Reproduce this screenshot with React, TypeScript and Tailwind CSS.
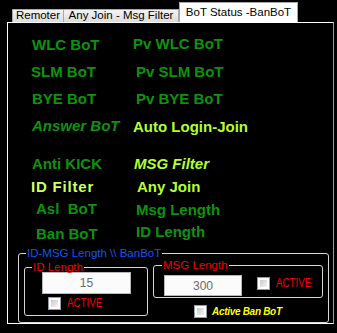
import React from "react";

const green = "text-[#0b940b]";
const lime = "text-[#b4ff2c]";

function Label({ children, cls = "" }: { children: React.ReactNode; cls?: string }) {
  return <span className={`font-bold text-[15px] leading-[17px] whitespace-pre ${cls}`}>{children}</span>;
}

function Check() {
  return (
    <div className="w-[13px] h-[13px] border border-[#8f9db0] bg-white p-[2px] shrink-0">
      <div className="w-full h-full bg-linear-to-br from-[#c9c9c9] to-[#f6f6f6]" />
    </div>
  );
}

function Active() {
  return (
    <span className="ml-[6px] inline-block origin-left scale-x-[0.78] text-[12.5px] leading-none text-[#f00000]">
      ACTIVE
    </span>
  );
}

export default function App() {
  return (
    <div className="w-[337px] h-[333px] bg-black overflow-hidden font-['Liberation_Sans',Arial,sans-serif]">
      {/* tab strip */}
      <div className="flex items-end h-[22px] pl-[12px]">
        <div className="w-[52px] h-[13px] border border-b-0 border-[#a9a9a9] bg-linear-to-b from-[#f3f3f3] to-[#dcdcdc] flex items-center justify-center text-[11.5px] leading-none text-black">
          Remoter
        </div>
        <div className="w-[115px] h-[13px] border border-b-0 border-l-0 border-[#a9a9a9] bg-linear-to-b from-[#f3f3f3] to-[#dcdcdc] flex items-center justify-center text-[11.5px] leading-none text-black">
          Any Join - Msg Filter
        </div>
        <div className="w-[119px] h-[20px] border border-b-0 border-[#a9a9a9] bg-white flex items-center justify-center text-[11.5px] leading-none text-black">
          BoT Status -BanBoT
        </div>
      </div>

      {/* tab page */}
      <div className="ml-[7px] w-[327px] h-[302px] border border-white border-r-[#9a9a9a] pt-[10px]">
        <div className="pl-[24px] flex flex-col">
          <div className="flex h-[27px] items-start">
            <span className="w-[101px]"><Label cls={green}>WLC BoT</Label></span>
            <span className="-mt-px"><Label cls={green}>Pv WLC BoT</Label></span>
          </div>
          <div className="flex h-[27px] items-start">
            <span className="w-[101px] -ml-px"><Label cls={green}>SLM BoT</Label></span>
            <span className="ml-[4px]"><Label cls={green}>Pv SLM BoT</Label></span>
          </div>
          <div className="flex h-[27px] items-start">
            <span className="w-[101px]"><Label cls={green}>BYE BoT</Label></span>
            <span className="ml-[3px]"><Label cls={green}>Pv BYE BoT</Label></span>
          </div>
          <div className="flex h-[38px] items-start">
            <span className="w-[101px]"><Label cls={`${green} italic`}>Answer BoT</Label></span>
            <span className="mt-px"><Label cls={lime}>Auto Login-Join</Label></span>
          </div>
          <div className="flex h-[23px] items-start">
            <span className="w-[101px]"><Label cls={green}>Anti KICK</Label></span>
            <span className="ml-px"><Label cls={`${lime} italic`}>MSG Filter</Label></span>
          </div>
          <div className="flex h-[22px] items-start">
            <span className="w-[101px] -ml-px"><Label cls="text-[#d2ff5c] tracking-[0.8px]">ID Filter</Label></span>
            <span className="ml-[5px]"><Label cls={lime}>Any Join</Label></span>
          </div>
          <div className="flex h-[24px] items-start">
            <span className="w-[101px] pl-[4px]"><Label cls={green}>Asl  BoT</Label></span>
            <span className="ml-[3px] mt-px"><Label cls={green}>Msg Length</Label></span>
          </div>
          <div className="flex h-[17px] items-start">
            <span className="w-[101px] pl-[4px] mt-px"><Label cls={green}>Ban BoT</Label></span>
            <span className="ml-[3px] -mt-px"><Label cls={green}>ID Length</Label></span>
          </div>
        </div>

        {/* group box */}
        <fieldset className="ml-[10px] mt-[9px] w-[311px] border border-[#d6d6d6] rounded-[3px] pl-[5px] pb-[4px]">
          <legend className="ml-[2px] px-px text-[11.5px] leading-[13px] text-[#1456ea]">ID-MSG Length \\ BanBoT</legend>
          <div className="flex items-start gap-[5px]">
            <fieldset className="mt-[2px] w-[124px] border border-[#d6d6d6] rounded-[3px] pb-[5px]">
              <legend className="ml-[7px] px-px text-[11.5px] leading-[10px] text-[#f00000]">ID Length</legend>
              <div className="ml-[17px] w-[89px] h-[22px] bg-[#fbfbfb] border border-[#b8b8b8] flex items-center justify-center text-[12px] text-[#6a6a6a]">
                15
              </div>
              <div className="mt-[3px] ml-[23px] flex items-center">
                <Check />
                <Active />
              </div>
            </fieldset>
            <div className="flex flex-col">
              <fieldset className="w-[170px] border border-[#d6d6d6] rounded-[3px] pb-px">
                <legend className="ml-[8px] px-px text-[11.5px] leading-[10px] text-[#f00000]">MSG Length</legend>
                <div className="mt-[5px] ml-[10px] flex items-start">
                  <div className="w-[78px] h-[21px] bg-[#fbfbfb] border border-[#b8b8b8] flex items-center justify-center text-[12px] text-[#6a6a6a]">
                    300
                  </div>
                  <div className="ml-[15px] mt-[2px] flex items-center">
                    <Check />
                    <Active />
                  </div>
                </div>
              </fieldset>
              <div className="mt-[7px] ml-[41px] flex items-center">
                <Check />
                <span className="ml-[5px] text-[10px] leading-none font-bold italic tracking-[-0.3px] text-[#ffff00]">Active Ban BoT</span>
              </div>
            </div>
          </div>
        </fieldset>
      </div>
    </div>
  );
}
